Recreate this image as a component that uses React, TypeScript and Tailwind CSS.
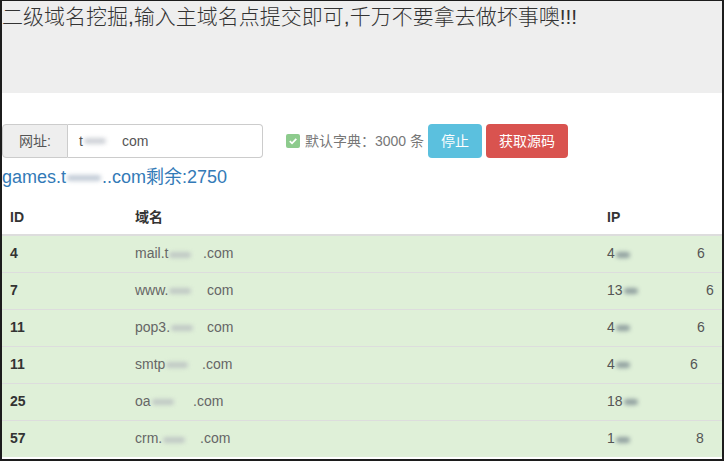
import React from "react";

const font = {
  fontFamily: '"Liberation Sans", Arial, "Noto Sans CJK SC", sans-serif',
};

function Smudge({ w, color = "#9aa3ad" }: { w: number; color?: string }) {
  return (
    <span
      className="mx-[1px] inline-block h-[6px] rounded-full align-middle opacity-70 blur-[2px]"
      style={{ width: w, background: color }}
    ></span>
  );
}

type Row = {
  id: string;
  pre: string;
  post: string;
  postAt: number;
  ipA: string;
  ipB: string;
  ipAt: number;
};

const rows: Row[] = [
  { id: "4", pre: "mail.t", post: ".com", postAt: 68, ipA: "4", ipB: "6", ipAt: 90 },
  { id: "7", pre: "www.", post: "com", postAt: 72, ipA: "13", ipB: "6", ipAt: 99 },
  { id: "11", pre: "pop3.", post: "com", postAt: 72, ipA: "4", ipB: "6", ipAt: 90 },
  { id: "11", pre: "smtp", post: ".com", postAt: 67, ipA: "4", ipB: "6", ipAt: 83 },
  { id: "25", pre: "oa", post: ".com", postAt: 58, ipA: "18", ipB: "", ipAt: 90 },
  { id: "57", pre: "crm.", post: ".com", postAt: 65, ipA: "1", ipB: "8", ipAt: 89 },
];

export default function App() {
  return (
    <div
      className="h-[461px] w-[724px] overflow-hidden border-x-2 border-b-2 border-t border-[#1c1c1c] bg-white text-[#333]"
      style={font}
    >
      <div className="h-[92px] bg-[#eeeeee]">
        <h1 className="text-[21px] font-light leading-[32px] text-[#333]">
          二级域名挖掘,输入主域名点提交即可,千万不要拿去做坏事噢!!!
        </h1>
      </div>

      <div className="mt-[31px] flex items-center">
        <div className="flex h-[34px] w-[261px] text-[14px]">
          <span className="flex w-[66px] items-center justify-center rounded-l-[4px] border border-[#ccc] bg-[#eee] text-[#555]">
            网址:
          </span>
          <div className="flex flex-1 items-center rounded-r-[4px] border border-l-0 border-[#ccc] pl-[11px] text-[#555]">
            t<Smudge w={22} color="#b9bec6" />
            <span className="ml-[15px]">com</span>
          </div>
        </div>

        <div className="ml-[23px] flex items-center text-[14px] text-[#777]">
          <span className="flex h-[14px] w-[14px] items-center justify-center rounded-[2px] bg-[#8dcb8d]">
            <svg width="10" height="10" viewBox="0 0 10 10">
              <path
                d="M1.8 5.2 L4 7.3 L8.3 2.8"
                fill="none"
                stroke="#fff"
                strokeWidth="1.8"
              />
            </svg>
          </span>
          <span className="ml-[5px]">默认字典：3000 条</span>
        </div>

        <button className="ml-[4px] h-[34px] w-[54px] rounded-[4px] bg-[#5bc0de] text-[14px] text-white">
          停止
        </button>
        <button className="ml-[4px] h-[34px] w-[82px] rounded-[4px] bg-[#d9534f] text-[14px] text-white">
          获取源码
        </button>
      </div>

      <div className="mt-[8px] text-[18px] leading-[22px] text-[#337ab7]">
        games.t<Smudge w={34} color="#a9b6c6" />
        ..com剩余:2750
      </div>

      <table className="mt-[13px] w-full border-collapse text-[14px]">
        <thead>
          <tr className="border-b-2 border-[#ddd]">
            <th className="h-[34px] w-[133px] pl-[8px] text-left font-bold">ID</th>
            <th className="text-left font-bold">域名</th>
            <th className="w-[115px] text-left font-bold">IP</th>
          </tr>
        </thead>
        <tbody>
          {rows.map((r, i) => (
            <tr key={i} className="h-[37px] border-t border-[#ddd] bg-[#dff0d8]">
              <td className="pl-[8px] font-bold">{r.id}</td>
              <td className="text-[#666]">
                <span className="inline-block" style={{ width: r.postAt }}>
                  {r.pre}
                  <Smudge w={22} color="#b3b8bd" />
                </span>
                {r.post}
              </td>
              <td className="text-[#555]">
                <span className="inline-block" style={{ width: r.ipAt }}>
                  {r.ipA}
                  <Smudge w={14} color="#6f7e88" />
                </span>
                {r.ipB}
              </td>
            </tr>
          ))}
        </tbody>
      </table>
    </div>
  );
}
